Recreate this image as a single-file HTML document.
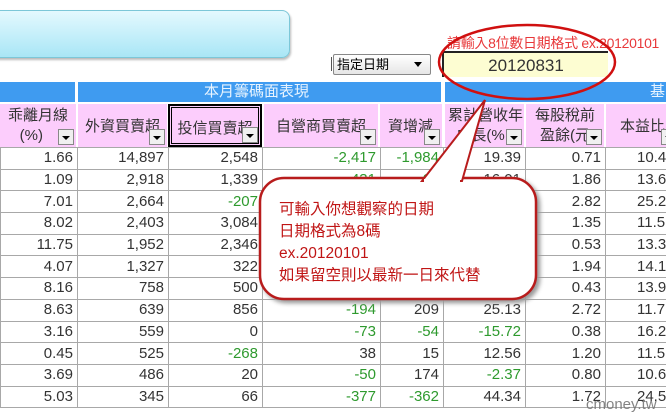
<!DOCTYPE html>
<html><head><meta charset="utf-8"><style>
body{margin:0;width:666px;height:414px;overflow:hidden;background:#fff;position:relative;font-family:"Liberation Sans","Noto Sans CJK TC",sans-serif;}
.abs{position:absolute}
table{border-collapse:collapse;table-layout:fixed;position:absolute;left:0;top:147px;width:736px}
td{height:20.7px;border:1px solid #a8a8a8;padding:0 4px 0 0;text-align:right;font-size:15px;color:#333;line-height:20px;overflow:hidden;white-space:nowrap}
.g{color:#2e9a2e}
.hd{position:absolute;top:104px;height:43px;background:#fccdfc;color:#333;font-size:15px;text-align:center;box-sizing:border-box;line-height:20px;overflow:hidden;white-space:nowrap}
.dd{position:absolute;right:2px;bottom:2px;width:16px;height:16px;background:#f0f0f0;border:1px solid #888;box-sizing:border-box}
.dd:after{content:"";position:absolute;left:3px;top:6px;border-left:4px solid transparent;border-right:4px solid transparent;border-top:4px solid #000}
.band{position:absolute;top:82px;height:20px;background:#3f9bf0;color:#e8f4ff;font-size:15px;line-height:20px}
.r td:last-child{text-align:left;padding-left:31px}
</style></head><body>
<div class="abs" style="left:-20px;top:10px;width:308px;height:46px;border-radius:8px;background:linear-gradient(#e4f9fe,#a9e6f6);border:1px solid #7cc7d8;box-shadow:1px 2px 2px #bbb"></div>
<div class="abs" style="left:331px;top:57px;width:6px;height:14px;border-left:1px solid #555"></div>

<div class="band" style="left:0;width:75px"></div>
<div class="band" style="left:78px;width:363px"><span style="position:absolute;left:126px">本月籌碼面表現</span></div>
<div class="band" style="left:445px;width:221px"><span style="position:absolute;left:205px">基</span></div>

<div class="hd" style="left:0;width:76px;padding-top:2px;text-align:right;padding-right:8px">乖離月線<br>(%)&nbsp;&nbsp;&nbsp;&nbsp;&nbsp;&nbsp;<div class="dd"></div></div>
<div class="hd" style="left:78px;width:89px;padding-top:13px;text-align:left;padding-left:7px">外資買賣超<div class="dd"></div></div>
<div class="hd" style="left:168px;width:94px;padding-top:13px;border:2px solid #000;outline:1px solid #000;outline-offset:-4px">投信買賣超<div class="dd"></div></div>
<div class="hd" style="left:264px;width:114px;padding-top:13px">自營商買賣超<div class="dd"></div></div>
<div class="hd" style="left:380px;width:62px;padding-top:13px;text-align:left;padding-left:8px">資增減<div class="dd"></div></div>
<div class="hd" style="left:445px;width:79px;padding-top:2px;text-align:left;padding-left:3px">累計營收年<br>&nbsp;&nbsp;成長(%<div class="dd"></div></div>
<div class="hd" style="left:526px;width:78px;padding-top:2px">每股稅前<br>盈餘(元<div class="dd"></div></div>
<div class="hd" style="left:606px;width:70px;padding-top:13px;text-align:left;padding-left:14px">本益比<div class="dd" style="right:auto;left:55px"></div></div>

<table class="r">
<colgroup><col style="width:77px"><col style="width:91px"><col style="width:94px"><col style="width:118px"><col style="width:63px"><col style="width:82px"><col style="width:80px"><col style="width:131px"></colgroup>
<tr><td>1.66</td><td>14,897</td><td>2,548</td><td class="g">-2,417</td><td class="g">-1,984</td><td>19.39</td><td>0.71</td><td>10.4</td></tr>
<tr><td>1.09</td><td>2,918</td><td>1,339</td><td class="g">431</td><td class="g">67</td><td>16.01</td><td>1.86</td><td>13.6</td></tr>
<tr><td>7.01</td><td>2,664</td><td class="g">-207</td><td></td><td></td><td></td><td>2.82</td><td>25.2</td></tr>
<tr><td>8.02</td><td>2,403</td><td>3,084</td><td></td><td></td><td></td><td>1.35</td><td>11.5</td></tr>
<tr><td>11.75</td><td>1,952</td><td>2,346</td><td></td><td></td><td></td><td>0.53</td><td>13.3</td></tr>
<tr><td>4.07</td><td>1,327</td><td>322</td><td></td><td></td><td></td><td>1.94</td><td>14.1</td></tr>
<tr><td>8.16</td><td>758</td><td>500</td><td></td><td></td><td></td><td>0.43</td><td>13.9</td></tr>
<tr><td>8.63</td><td>639</td><td>856</td><td class="g">-194</td><td>209</td><td>25.13</td><td>2.72</td><td>11.7</td></tr>
<tr><td>3.16</td><td>559</td><td>0</td><td class="g">-73</td><td class="g">-54</td><td class="g">-15.72</td><td>0.38</td><td>16.2</td></tr>
<tr><td>0.45</td><td>525</td><td class="g">-268</td><td>38</td><td>15</td><td>12.56</td><td>1.20</td><td>11.5</td></tr>
<tr><td>3.69</td><td>486</td><td>20</td><td class="g">-50</td><td>174</td><td class="g">-2.37</td><td>0.80</td><td>10.6</td></tr>
<tr><td>5.03</td><td>345</td><td>66</td><td class="g">-377</td><td class="g">-362</td><td>44.34</td><td>1.72</td><td>24.5</td></tr>
</table>

<div class="abs" style="left:333px;top:54px;width:93px;height:19px;border:1px solid #888;border-radius:2px;background:linear-gradient(#fff,#e6e6e6);font-size:13px;line-height:19px;padding-left:3px">指定日期<span style="position:absolute;right:8px;top:7px;border-left:4px solid transparent;border-right:4px solid transparent;border-top:5px solid #000"></span></div>
<div class="abs" style="left:442px;top:51px;width:164px;height:24px;background:#fdfdd2;border-top:2px solid #222;border-left:2px solid #222;font-size:17px;line-height:26px;text-align:center;color:#333">20120831</div>
<div class="abs" style="left:447px;top:33px;width:230px;font-size:14px;color:#e8383a;white-space:nowrap;letter-spacing:-0.3px">請輸入8位數日期格式 ex.20120101</div>

<svg class="abs" style="left:0;top:0" width="666" height="414">
<ellipse cx="527" cy="62" rx="88" ry="37" fill="none" stroke="#d01010" stroke-width="2.5"/>
<rect x="260" y="178" width="276" height="121" rx="24" fill="#fff" stroke="#b81c1c" stroke-width="2.5" style="filter:drop-shadow(3px 3px 2px #999)"/>
<path d="M422 181 L485 100 L462 181 Z" fill="#fff" stroke="#b81c1c" stroke-width="2"/>
<path d="M424 181 L460 181" stroke="#fff" stroke-width="4"/>
</svg>
<div class="abs" style="left:279px;top:199px;font-size:15.5px;line-height:22px;color:#c01515">可輸入你想觀察的日期<br>日期格式為8碼<br>ex.20120101<br>如果留空則以最新一日來代替</div>
<div class="abs" style="left:586px;top:396px;font-size:15px;color:#777;opacity:.9">cmoney.tw</div>
</body></html>
